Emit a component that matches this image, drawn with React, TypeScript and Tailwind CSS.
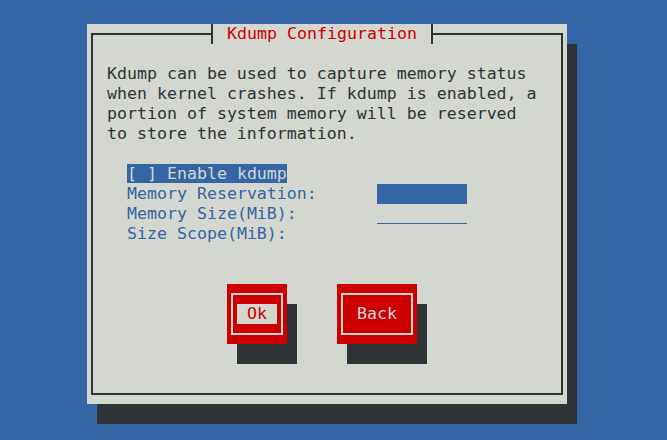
import React from "react";

const lines = [
  "Kdump can be used to capture memory status",
  "when kernel crashes. If kdump is enabled, a",
  "portion of system memory will be reserved",
  "to store the information.",
];

const TuiButton = ({ label, focused, width }: { label: string; focused?: boolean; width: string }) => (
  <div className={`${width} h-[60px] bg-[#cc0000] px-[4px] py-[9px] shadow-[10px_20px_0_0_#2e3436]`}>
    <div className="flex h-full items-center justify-center border-2 border-[#d3d7cf]">
      {focused ? (
        <span className="h-[20px] w-[40px] bg-[#d3d7cf] text-center text-[#cc0000]">{label}</span>
      ) : (
        <span className="text-[#d3d7cf]">{label}</span>
      )}
    </div>
  </div>
);

const App = () => {
  return (
    <div className="h-[440px] w-[667px] overflow-hidden bg-[#3465a4] pl-[87px] pt-[24px] font-['DejaVu_Sans_Mono',monospace] text-[16.6px] leading-[20px]">
      <div className="relative h-[380px] w-[480px] bg-[#d3d7cf] px-[4px] py-[9px] shadow-[10px_20px_0_0_#2e3436]">
        <div className="h-full border-2 border-[#2e3436] pl-[14px] pt-[29px]">
          <div className="text-[#2e3436]">
            {lines.map((l) => (
              <div key={l} className="whitespace-pre">{l}</div>
            ))}
          </div>

          <div className="ml-[20px] mt-[20px] text-[#3465a4]">
            <div>
              <span className="whitespace-pre bg-[#3465a4] text-[#d3d7cf]">[ ] Enable kdump</span>
            </div>
            <div className="flex">
              <span className="w-[250px]">Memory Reservation:</span>
              <span className="h-[20px] w-[90px] bg-[#3465a4]" />
            </div>
            <div className="flex">
              <span className="w-[250px]">Memory Size(MiB):</span>
              <span className="h-[20px] w-[90px] border-b border-[#3465a4]" />
            </div>
            <div className="flex">
              <span className="w-[250px]">Size Scope(MiB):</span>
            </div>
          </div>

          <div className="ml-[120px] mt-[40px] flex gap-[50px]">
            <TuiButton label="Ok" focused width="w-[60px]" />
            <TuiButton label="Back" width="w-[80px]" />
          </div>
        </div>

        <div className="absolute left-[124px] top-0 flex h-[20px] w-[222px] justify-center border-x-2 border-[#2e3436] bg-[#d3d7cf] text-[#cc0000]">
          Kdump Configuration
        </div>
      </div>
    </div>
  );
};

export default App;
